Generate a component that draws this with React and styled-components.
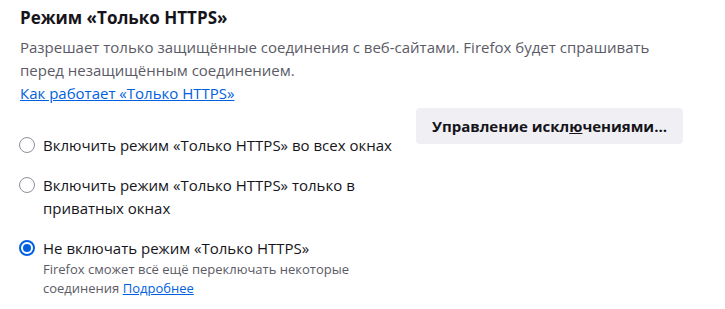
import React, { useState } from 'react';
import styled, { createGlobalStyle } from 'styled-components';

const GlobalStyle = createGlobalStyle`
  body {
    margin: 0;
    background: #fff;
    font-family: "Open Sans", "Liberation Sans", sans-serif;
    color: #15141a;
  }
`;

const Section = styled.section`
  padding: 6px 42px 0 20px;
`;

const Title = styled.h2`
  margin: 0;
  font-size: 17px;
  font-weight: 700;
  line-height: 24px;
`;

const Description = styled.p`
  margin: 6px 0 0;
  font-size: 15px;
  line-height: 23px;
  color: #5b5b66;
`;

const Link = styled.a`
  color: #0061e0;
  text-decoration: underline;
  cursor: pointer;
`;

const Body = styled.div`
  display: flex;
  align-items: flex-start;
  gap: 16px;
  margin-top: 3px;
`;

const RadioGroup = styled.div`
  flex: 1;
  display: flex;
  flex-direction: column;
  gap: 17px;
  padding-top: 26px;
`;

const Option = styled.label`
  display: flex;
  align-items: flex-start;
  gap: 8px;
  cursor: pointer;
`;

const RadioCircle = styled.span`
  flex: none;
  width: 16px;
  height: 16px;
  margin: 3px 0 0 -1px;
  box-sizing: border-box;
  border-radius: 50%;
  border: ${(p) => (p.checked ? '2px solid #0061e0' : '1px solid #8f8f9d')};
  background: #fff;
  display: flex;
  align-items: center;
  justify-content: center;
  &::after {
    content: '';
    display: ${(p) => (p.checked ? 'block' : 'none')};
    width: 8px;
    height: 8px;
    border-radius: 50%;
    background: #0061e0;
  }
`;

const LabelText = styled.div`
  font-size: 15px;
  line-height: 23px;
`;

const Note = styled.div`
  font-size: 13px;
  line-height: 19px;
  color: #5b5b66;
  margin-top: 0;
`;

const ManageButton = styled.button`
  flex: none;
  width: 267px;
  height: 36px;
  border: none;
  border-radius: 4px;
  background: #f0f0f4;
  color: #15141a;
  font-family: inherit;
  font-size: 15px;
  font-weight: 700;
  cursor: pointer;
  &:hover {
    background: #e0e0e6;
  }
`;

const AccessKey = styled.span`
  text-decoration: underline;
`;

const options = [
  { id: 'all', label: 'Включить режим «Только HTTPS» во всех окнах' },
  { id: 'private', label: 'Включить режим «Только HTTPS» только в приватных окнах' },
  { id: 'off', label: 'Не включать режим «Только HTTPS»', note: true },
];

export default function App() {
  const [mode, setMode] = useState('off');

  return (
    <>
      <GlobalStyle />
      <Section>
        <Title>Режим «Только HTTPS»</Title>
        <Description>
          Разрешает только защищённые соединения с веб-сайтами. Firefox будет спрашивать
          перед незащищённым соединением.
          <br />
          <Link>Как работает «Только HTTPS»</Link>
        </Description>
        <Body>
          <RadioGroup>
            {options.map((o) => (
              <Option key={o.id} onClick={() => setMode(o.id)}>
                <RadioCircle checked={mode === o.id} />
                <div>
                  <LabelText>{o.label}</LabelText>
                  {o.note && (
                    <Note>
                      Firefox сможет всё ещё переключать некоторые соединения{' '}
                      <Link>Подробнее</Link>
                    </Note>
                  )}
                </div>
              </Option>
            ))}
          </RadioGroup>
          <ManageButton>
            Управление искл<AccessKey>ю</AccessKey>чениями…
          </ManageButton>
        </Body>
      </Section>
    </>
  );
}
